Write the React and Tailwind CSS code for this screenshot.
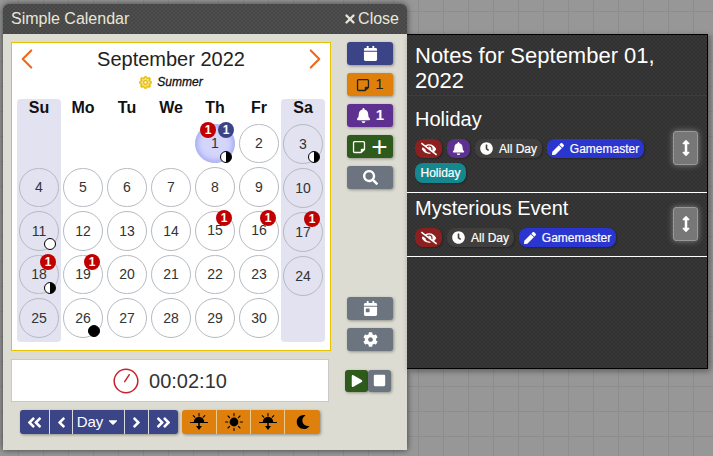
import React from "react";
import { ChevronLeft, ChevronRight, X } from "lucide-react";
import {
  FaAngleDoubleLeft,
  FaAngleDoubleRight,
  FaAngleLeft,
  FaAngleRight,
  FaArrowsAltV,
  FaBell,
  FaCalendar,
  FaCalendarDay,
  FaCaretDown,
  FaClock,
  FaCog,
  FaEyeSlash,
  FaMoon,
  FaPen,
  FaPlay,
  FaRegSun,
  FaSearch,
  FaStop,
} from "react-icons/fa";
import { FaRegNoteSticky } from "react-icons/fa6";

const weekDays = ["Su", "Mo", "Tu", "We", "Th", "Fr", "Sa"];

// per day decorations
const notes = { 15: 1, 16: 1, 17: 1, 18: 1, 19: 1 };
const moons = { 1: "half", 3: "half", 11: "full", 18: "half", 26: "new" };

const Moon = ({ type }) => {
  let fill = "bg-white";
  if (type === "new") fill = "bg-black";
  if (type === "half") fill = "bg-[linear-gradient(90deg,#fff_50%,#000_50%)]";
  return (
    <span
      className={`absolute left-[24px] top-[26px] w-[12px] h-[12px] rounded-full border border-black ${fill}`}
    />
  );
};

const Badge = ({ className, children }) => (
  <span
    className={`absolute w-[16px] h-[16px] rounded-full flex items-center justify-center text-white text-[12px] font-bold ${className}`}
  >
    {children}
  </span>
);

const Day = ({ n }) => {
  const today = n === 1;
  return (
    <div
      className={`relative w-[40px] h-[40px] mb-[4px] rounded-full border flex items-center justify-center text-[14px] text-[#333] ${
        today
          ? "border-[#aab0e8] bg-[#d3d5fb] shadow-[inset_0_0_6px_#8f93f5]"
          : "border-[#b5bac2]"
      }`}
    >
      {n}
      {notes[n] && <Badge className="left-[20px] top-[-2px] bg-[#c00000]">1</Badge>}
      {today && <Badge className="left-[4px] top-[-3px] bg-[#c00000]">1</Badge>}
      {today && <Badge className="left-[22px] top-[-3px] bg-[#3c4488]">1</Badge>}
      {moons[n] && <Moon type={moons[n]} />}
    </div>
  );
};

const Calendar = () => {
  const cells = [null, null, null, null];
  for (let i = 1; i <= 30; i++) cells.push(i);

  return (
    <div className="w-[320px] h-[309px] border border-[#e6c200] bg-white pt-[4px] px-[5px]">
      <div className="flex items-center justify-between h-[24px]">
        <ChevronLeft className="w-[34px] h-[34px] ml-[-7px] text-[#ef6a1a]" strokeWidth={1.5} />
        <span className="text-[20px] text-[#222]">September 2022</span>
        <ChevronRight className="w-[34px] h-[34px] mr-[-7px] text-[#ef6a1a]" strokeWidth={1.5} />
      </div>
      <div className="flex items-center justify-center gap-[5px] h-[20px] mt-[1px] text-[12px] italic text-[#111] [-webkit-text-stroke:0.3px_#111]">
        <FaRegSun className="text-[#e6c21a] text-[13px] [-webkit-text-stroke:0]" stroke="#e6c21a" strokeWidth={30} />
        Summer
      </div>
      <div className="flex mt-[7px] w-[308px]">
        {weekDays.map((d, c) => (
          <div
            key={d}
            className={`w-[44px] h-[243px] rounded-[4px] flex flex-col items-center ${
              c === 0 || c === 6 ? "bg-[#e2e2f0]" : ""
            }`}
          >
            <div className="h-[25px] text-[16px] leading-[17px] font-bold text-[#111]">{d}</div>
            {cells
              .filter((_, i) => i % 7 === c)
              .map((n, i) =>
                n ? <Day key={i} n={n} /> : <div key={i} className="h-[44px] shrink-0" />
              )}
          </div>
        ))}
      </div>
    </div>
  );
};

const SideBtn = ({ className = "", children }) => (
  <div
    className={`w-[46px] h-[23px] rounded-[3px] flex items-center justify-center gap-[5px] text-white text-[15px] font-bold shadow-[1px_1px_3px_rgba(0,0,0,0.35)] ${className}`}
  >
    {children}
  </div>
);

const Sidebar = () => (
  <div className="w-[46px] h-[309px] flex flex-col justify-between">
    <div className="flex flex-col gap-[8px]">
      <SideBtn className="bg-[#3c4488]">
        <FaCalendar className="text-[15px]" />
      </SideBtn>
      <SideBtn className="bg-[#e0800c]">
        <FaRegNoteSticky className="text-[14px] text-[#222]" />
        <span className="font-normal text-[#222]">1</span>
      </SideBtn>
      <SideBtn className="h-[22px] bg-[#5e3190]">
        <FaBell className="text-[15px]" />
        1
      </SideBtn>
      <SideBtn className="bg-[#2e5a1c] gap-[3px]">
        <FaRegNoteSticky className="text-[14px]" />
        <span className="text-[28px] leading-none font-normal">+</span>
      </SideBtn>
      <SideBtn className="bg-[#6c7480]">
        <FaSearch className="text-[15px]" />
      </SideBtn>
    </div>
    <div className="flex flex-col gap-[8px]">
      <SideBtn className="bg-[#6c7480]">
        <FaCalendarDay className="text-[15px]" />
      </SideBtn>
      <SideBtn className="bg-[#6c7480]">
        <FaCog className="text-[15px]" />
      </SideBtn>
    </div>
  </div>
);

const Clock = () => (
  <div className="w-[318px] h-[43px] border border-[#c9c9c9] bg-white flex items-center justify-center gap-[10px]">
    <svg width="26" height="26" viewBox="0 0 26 26" fill="none" stroke="#c8232c" strokeLinecap="round">
      <circle cx="13" cy="13" r="11.8" strokeWidth="1.5" />
      <path d="M11.7 13.7 L16.3 6.7" strokeWidth="1.5" />
    </svg>
    <span className="text-[20px] text-[#333]">00:02:10</span>
  </div>
);

const TimeControls = () => (
  <div className="flex h-[22px] w-[46px]">
    <div className="w-[23px] h-full rounded-[3px] bg-[#2e5a1c] flex items-center justify-center text-white text-[12px] shadow-[1px_1px_3px_rgba(0,0,0,0.35)]">
      <FaPlay />
    </div>
    <div className="w-[23px] h-full rounded-[3px] bg-[#6c7480] flex items-center justify-center text-white text-[13px] shadow-[1px_1px_3px_rgba(0,0,0,0.35)]">
      <FaStop />
    </div>
  </div>
);

const Seg = ({ className = "", children }) => (
  <div className={`h-full flex items-center justify-center border-r last:border-r-0 ${className}`}>
    {children}
  </div>
);

const SunHorizon = () => (
  <svg width="18" height="18" viewBox="0 0 18 18" fill="#000" stroke="#000" strokeWidth="1.1" strokeLinecap="round">
    <path d="M9 0.5V3M3.2 2.6L4.8 4.2M14.8 2.6L13.2 4.2" fill="none" />
    <path d="M3.8 9a5.2 5.2 0 0 1 10.4 0z" stroke="none" />
    <path d="M0.5 9.5H17.5" fill="none" />
    <path d="M9 10.5V14" fill="none" strokeWidth="1.5" />
    <path d="M6 13H12L9 17z" stroke="none" />
  </svg>
);

const SunFull = () => (
  <svg width="18" height="18" viewBox="0 0 18 18" fill="#000" stroke="#000" strokeWidth="1.1" strokeLinecap="round">
    <circle cx="9" cy="9" r="4.4" stroke="none" />
    <path d="M9 0.5V2.8M9 15.2V17.5M0.5 9H2.8M15.2 9H17.5M3 3L4.6 4.6M13.4 13.4L15 15M15 3L13.4 4.6M3 15L4.6 13.4" fill="none" />
  </svg>
);

const Stepper = () => (
  <div className="flex gap-[4px] h-[24px] ml-[9px]">
    <div className="flex w-[158px] rounded-[3px] bg-[#3c4488] text-white text-[17px] shadow-[1px_1px_3px_rgba(0,0,0,0.35)]">
      <Seg className="w-[30px] border-[#dcdcdc]"><FaAngleDoubleLeft /></Seg>
      <Seg className="w-[23px] border-[#dcdcdc]"><FaAngleLeft /></Seg>
      <Seg className="w-[52px] gap-[3px] text-[15px] border-[#dcdcdc]">Day <FaCaretDown className="text-[14px]" /></Seg>
      <Seg className="w-[24px] border-[#dcdcdc]"><FaAngleRight /></Seg>
      <Seg className="w-[29px]"><FaAngleDoubleRight /></Seg>
    </div>
    <div className="flex w-[138px] rounded-[3px] bg-[#e0800c] text-black shadow-[1px_1px_3px_rgba(0,0,0,0.35)]">
      <Seg className="w-[35px] border-[#ecc98c]"><SunHorizon /></Seg>
      <Seg className="w-[34px] border-[#ecc98c]"><SunFull /></Seg>
      <Seg className="w-[34px] border-[#ecc98c]"><SunHorizon /></Seg>
      <Seg className="w-[35px]"><FaMoon className="text-[14px]" /></Seg>
    </div>
  </div>
);

const Pill = ({ className = "", children }) => (
  <span
    className={`h-[19px] rounded-[8px] flex items-center justify-center gap-[6px] text-[12px] text-white shadow-[1px_1px_2px_rgba(0,0,0,0.3)] [-webkit-text-stroke:0.2px_#fff] ${className}`}
  >
    {children}
  </span>
);

const Hidden = () => (
  <Pill className="w-[27px] bg-[#8c1f1f]"><FaEyeSlash className="text-[16px]" /></Pill>
);
const AllDay = () => (
  <Pill className="w-[67px] bg-[#403f3d]"><FaClock className="text-[13px]" />All Day</Pill>
);
const Author = () => (
  <Pill className="w-[97px] bg-[#2b35cf]"><FaPen className="text-[12px]" />Gamemaster</Pill>
);
const Expand = () => (
  <div className="w-[25px] h-[34px] shrink-0 rounded-[3px] border border-[#999] bg-[#777] flex items-center justify-center text-white shadow-[0_0_6px_rgba(255,255,255,0.4)]">
    <FaArrowsAltV className="text-[16px]" />
  </div>
);

const NotesPanel = () => (
  <div className="w-[301px] h-[335px] border border-black border-l-0 bg-[#333] bg-[repeating-conic-gradient(#383838_0_25%,#303030_0_50%)] bg-[length:4px_4px] text-white shadow-[2px_2px_6px_rgba(0,0,0,0.4)]">
    <div className="h-[61px] pt-[8px] pl-[8px] pr-[20px] text-[22px] leading-[25px] border-b border-[#6a2a26]">
      Notes for September 01, 2022
    </div>
    <div className="h-[97px] border-b border-white pl-[8px] pr-[9px] flex justify-between">
      <div className="pt-[10px]">
        <div className="text-[20px] leading-[26px]">Holiday</div>
        <div className="flex flex-wrap gap-[5px] mt-[7px] w-[250px]">
          <Hidden />
          <Pill className="w-[23px] bg-[#5e3190]"><FaBell className="text-[13px]" /></Pill>
          <AllDay />
          <Author />
          <Pill className="w-[51px] h-[20px] bg-[#14878f]">Holiday</Pill>
        </div>
      </div>
      <div className="pt-[35px]"><Expand /></div>
    </div>
    <div className="h-[64px] border-b border-white pl-[8px] pr-[9px] flex justify-between">
      <div className="pt-[2px]">
        <div className="text-[20px] leading-[26px]">Mysterious Event</div>
        <div className="flex gap-[5px] mt-[7px]">
          <Hidden />
          <AllDay />
          <Author />
        </div>
      </div>
      <div className="pt-[14px]"><Expand /></div>
    </div>
  </div>
);

export default function App() {
  return (
    <div
      className="w-[713px] h-[456px] overflow-hidden bg-[#979797] bg-[linear-gradient(#8d8d8d_1px,transparent_1px),linear-gradient(90deg,#8d8d8d_1px,transparent_1px)] bg-[length:25px_25px] bg-[position:18px_11px] pl-[3px] pt-[4px] flex items-start"
      style={{ fontFamily: '"Liberation Sans", Arial, sans-serif' }}
    >
      <div className="w-[404px] h-[446px] rounded-t-[6px] overflow-hidden bg-[#dddcd2] shadow-[0_0_6px_rgba(0,0,0,0.6)]">
        <div className="h-[30px] bg-[#4a4a4a] bg-[repeating-conic-gradient(#4e4e4e_0_25%,#464646_0_50%)] bg-[length:4px_4px] text-[#e8e6d8] flex items-center justify-between pl-[8px] pr-[8px] text-[16px]">
          <span>Simple Calendar</span>
          <span className="flex items-center gap-[1px]"><X className="w-[14px] h-[14px]" strokeWidth={4} />Close</span>
        </div>
        <div className="pl-[8px] pt-[8px]">
          <div className="flex">
            <Calendar />
            <div className="ml-[16px]"><Sidebar /></div>
          </div>
          <div className="flex items-center mt-[8px]">
            <Clock />
            <div className="ml-[16px]"><TimeControls /></div>
          </div>
          <div className="mt-[8px]"><Stepper /></div>
        </div>
      </div>
      <div className="mt-[30px]"><NotesPanel /></div>
    </div>
  );
}
